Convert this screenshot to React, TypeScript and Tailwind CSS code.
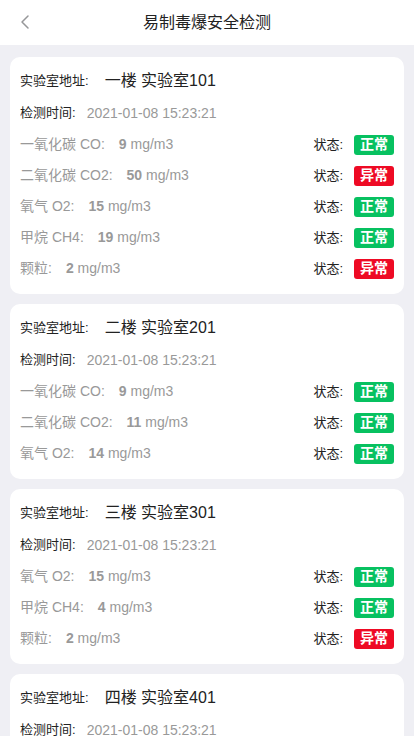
import React from "react";

type Gas = { name: string; value: string; ok: boolean };
type Lab = { floor: string; room: string; time: string; gases: Gas[] };

const labs: Lab[] = [
  {
    floor: "一楼",
    room: "实验室101",
    time: "2021-01-08 15:23:21",
    gases: [
      { name: "一氧化碳 CO:", value: "9", ok: true },
      { name: "二氧化碳 CO2:", value: "50", ok: false },
      { name: "氧气 O2:", value: "15", ok: true },
      { name: "甲烷 CH4:", value: "19", ok: true },
      { name: "颗粒:", value: "2", ok: false },
    ],
  },
  {
    floor: "二楼",
    room: "实验室201",
    time: "2021-01-08 15:23:21",
    gases: [
      { name: "一氧化碳 CO:", value: "9", ok: true },
      { name: "二氧化碳 CO2:", value: "11", ok: true },
      { name: "氧气 O2:", value: "14", ok: true },
    ],
  },
  {
    floor: "三楼",
    room: "实验室301",
    time: "2021-01-08 15:23:21",
    gases: [
      { name: "氧气 O2:", value: "15", ok: true },
      { name: "甲烷 CH4:", value: "4", ok: true },
      { name: "颗粒:", value: "2", ok: false },
    ],
  },
  {
    floor: "四楼",
    room: "实验室401",
    time: "2021-01-08 15:23:21",
    gases: [
      { name: "一氧化碳 CO:", value: "9", ok: true },
      { name: "氧气 O2:", value: "15", ok: true },
    ],
  },
];

const LabCard = ({ lab }: { lab: Lab }) => (
  <div className="bg-white rounded-[10px] px-[10px] pt-[8px] pb-[10px]">
    <div className="h-[32px] flex items-center">
      <span className="text-[13px] text-[#222]">实验室地址:</span>
      <span className="ml-[16px] text-[16px] text-[#222]">
        {lab.floor} {lab.room}
      </span>
    </div>
    <div className="h-[32px] flex items-center">
      <span className="text-[13px] text-[#222]">检测时间:</span>
      <span className="ml-[11px] text-[14px] text-[#999]">{lab.time}</span>
    </div>
    {lab.gases.map((g, i) => (
      <div key={i} className="h-[31px] flex items-center">
        <span className="text-[14px] text-[#999]">{g.name}</span>
        <span className="ml-[14px] text-[14px] text-[#999]">
          <b className="font-bold">{g.value}</b> mg/m3
        </span>
        <span className="ml-auto text-[13px] text-[#222]">状态:</span>
        <span
          className={
            "ml-[11px] w-[40px] h-[20px] rounded-[3px] flex items-center justify-center text-white text-[14px] font-bold " +
            (g.ok ? "bg-[#07c160]" : "bg-[#ee0a24]")
          }
        >
          {g.ok ? "正常" : "异常"}
        </span>
      </div>
    ))}
  </div>
);

export default function App() {
  return (
    <div
      className="w-[414px] h-[736px] overflow-hidden bg-[#efeff4]"
      style={{ fontFamily: '"Liberation Sans", "Noto Sans CJK SC", sans-serif' }}
    >
      <div className="h-[45px] bg-white relative flex items-center justify-center">
        <svg
          className="absolute left-[18px] top-[14px]"
          width="14"
          height="16"
          viewBox="0 0 14 16"
          fill="none"
        >
          <polyline
            points="10,2 4,8 10,14"
            stroke="#969799"
            strokeWidth="1.5"
            strokeLinecap="round"
            strokeLinejoin="round"
          />
        </svg>
        <span className="text-[16px] text-[#222]">易制毒爆安全检测</span>
      </div>
      <div className="px-[10px] pt-[12px] flex flex-col gap-[10px]">
        {labs.map((lab, i) => (
          <LabCard key={i} lab={lab} />
        ))}
      </div>
    </div>
  );
}
